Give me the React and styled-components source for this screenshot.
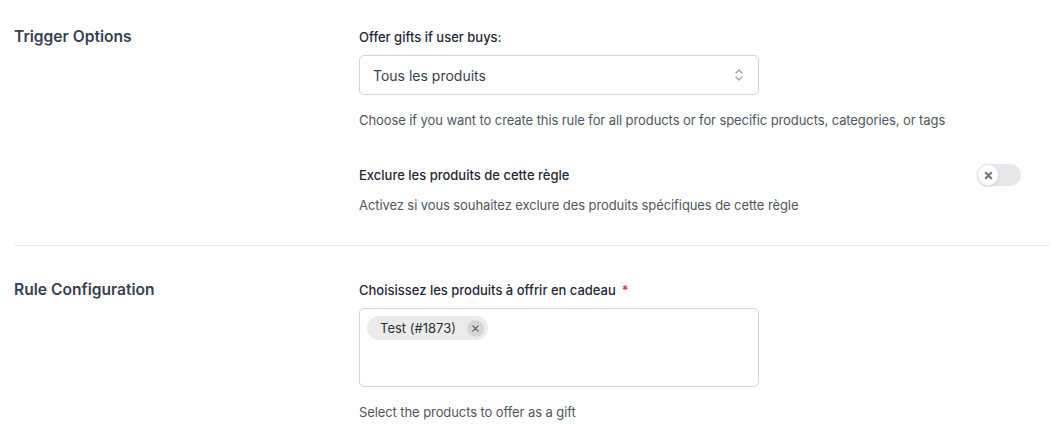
import React from 'react';
import styled, { createGlobalStyle } from 'styled-components';

const GlobalStyle = createGlobalStyle`
  body {
    margin: 0;
    background: #ffffff;
    font-family: Inter, "Noto Sans", sans-serif;
    -webkit-font-smoothing: antialiased;
  }
`;

const Page = styled.div`
  padding: 0 2px 0 14px;
`;

const Section = styled.section`
  display: grid;
  grid-template-columns: 345px 1fr;
  padding: ${(p) => p.pad};
  border-bottom: ${(p) => (p.divided ? '1px solid #e2e4e7' : 'none')};
`;

const SectionTitle = styled.h2`
  margin: 0;
  font-size: 15.6px;
  font-weight: 600;
  line-height: 22px;
  color: #374151;
`;

const Fields = styled.div`
  display: flex;
  flex-direction: column;
  gap: 35px;
  padding-right: 29px;
`;

const Field = styled.div`
  display: flex;
  flex-direction: column;
`;

const LabelRow = styled.div`
  display: flex;
  align-items: center;
  justify-content: space-between;
  height: 20px;
  margin-top: 1px;
`;

const Label = styled.label`
  font-size: 13px;
  font-weight: 500;
  line-height: 20px;
  color: #1f2937;
`;

const Required = styled.span`
  color: #dc2626;
  margin-left: 6px;
`;

const Help = styled.p`
  margin: ${(p) => p.top} 0 0;
  font-size: 13px;
  line-height: 18px;
  letter-spacing: -0.09px;
  color: #50575e;
`;

const SelectBox = styled.div`
  margin-top: 8px;
  width: 400px;
  height: 40px;
  box-sizing: border-box;
  border: 1px solid #d1d5db;
  border-radius: 5px;
  display: flex;
  align-items: center;
  justify-content: space-between;
  padding: 0 14px 0 13px;
  font-size: 14px;
  color: #374151;
`;

const MultiBox = styled.div`
  margin-top: 8px;
  width: 400px;
  height: 79px;
  box-sizing: border-box;
  border: 1px solid #d1d5db;
  border-radius: 5px;
  padding: 7px;
  display: flex;
  align-items: flex-start;
`;

const Chip = styled.span`
  display: inline-flex;
  align-items: center;
  gap: 11px;
  height: 24px;
  padding: 0 4px 0 13px;
  border-radius: 12px;
  background: #ebebeb;
  font-size: 13px;
  color: #2c3338;
`;

const ChipRemove = styled.span`
  display: flex;
  align-items: center;
  justify-content: center;
  width: 17px;
  height: 17px;
  border-radius: 50%;
  background: #d6d6d6;
  color: #50575e;
`;

const Toggle = styled.span`
  position: relative;
  display: inline-block;
  width: 44px;
  height: 22px;
  border-radius: 11px;
  background: #e5e7eb;
`;

const Knob = styled.span`
  position: absolute;
  left: 0;
  top: 0;
  width: 22px;
  height: 22px;
  box-sizing: border-box;
  border-radius: 50%;
  background: #ffffff;
  border: 1px solid #e5e7eb;
  box-shadow: 0 1px 2px rgba(0, 0, 0, 0.12);
  display: flex;
  align-items: center;
  justify-content: center;
  color: #6b7280;
`;

const Chevrons = () => (
  <svg width="10" height="14" viewBox="0 0 10 14" fill="none" stroke="#9ca3af" strokeWidth="1.3" strokeLinecap="round" strokeLinejoin="round">
    <path d="M2 5 L5 2 L8 5" />
    <path d="M2 9 L5 12 L8 9" />
  </svg>
);

const Cross = ({ size, width }) => (
  <svg width={size} height={size} viewBox="0 0 10 10" fill="none" stroke="currentColor" strokeWidth={width} strokeLinecap="round">
    <path d="M2 2 L8 8 M8 2 L2 8" />
  </svg>
);

const App = () => (
  <Page>
    <GlobalStyle />
    <Section pad="26px 0 31px" divided>
      <SectionTitle>Trigger Options</SectionTitle>
      <Fields>
        <Field>
          <LabelRow>
            <Label>Offer gifts if user buys:</Label>
          </LabelRow>
          <SelectBox>
            <span>Tous les produits</span>
            <Chevrons />
          </SelectBox>
          <Help top="16px">
            Choose if you want to create this rule for all products or for specific products, categories, or tags
          </Help>
        </Field>
        <Field>
          <LabelRow>
            <Label>Exclure les produits de cette règle</Label>
            <Toggle>
              <Knob>
                <Cross size={9} width={2.2} />
              </Knob>
            </Toggle>
          </LabelRow>
          <Help top="11px">Activez si vous souhaitez exclure des produits spécifiques de cette règle</Help>
        </Field>
      </Fields>
    </Section>
    <Section pad="33px 0 0">
      <SectionTitle>Rule Configuration</SectionTitle>
      <Fields>
        <Field>
          <LabelRow>
            <Label>
              Choisissez les produits à offrir en cadeau
              <Required>*</Required>
            </Label>
          </LabelRow>
          <MultiBox>
            <Chip>
              Test (#1873)
              <ChipRemove>
                <Cross size={9} width={1.2} />
              </ChipRemove>
            </Chip>
          </MultiBox>
          <Help top="16px">Select the products to offer as a gift</Help>
        </Field>
      </Fields>
    </Section>
  </Page>
);

export default App;
